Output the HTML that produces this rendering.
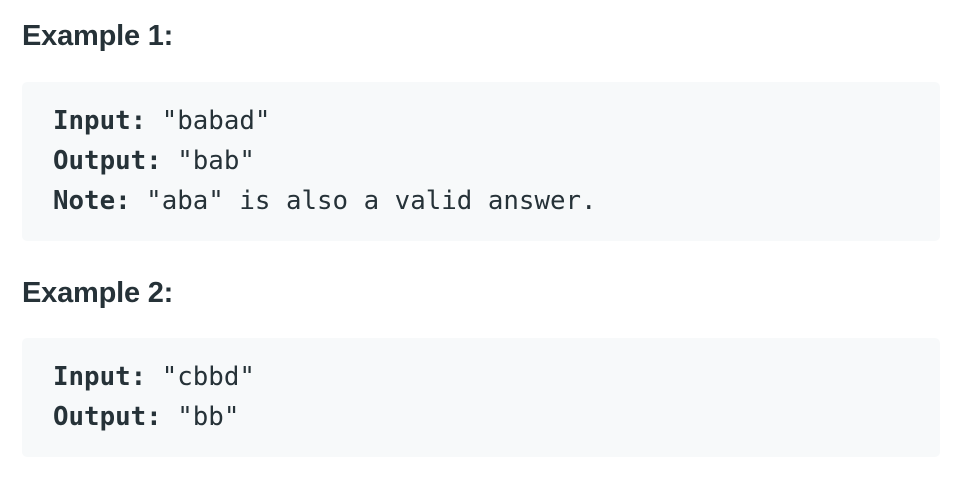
<!DOCTYPE html>
<html><head><meta charset="utf-8"><style>
html,body{margin:0;padding:0;background:#fff;width:962px;height:482px;overflow:hidden}
.h{position:absolute;left:22px;font:bold 29px/32px "Liberation Sans",sans-serif;color:#263238;letter-spacing:-0.2px}
.box{position:absolute;left:22px;width:918px;background:#f7f9fa;border-radius:5px}
.code{position:absolute;left:53px;font:25.8px/40px "DejaVu Sans Mono","Liberation Mono",monospace;color:#263238;white-space:pre}
.code b{font-weight:bold}
</style></head><body>
<div class="h" style="top:20px">Example 1:</div>
<div class="box" style="top:82px;height:159px"></div>
<div class="code" style="top:101px"><b>Input:</b> "babad"
<b>Output:</b> "bab"
<b>Note:</b> "aba" is also a valid answer.</div>
<div class="h" style="top:277px">Example 2:</div>
<div class="box" style="top:338px;height:119px"></div>
<div class="code" style="top:357px"><b>Input:</b> "cbbd"
<b>Output:</b> "bb"</div>
</body></html>
